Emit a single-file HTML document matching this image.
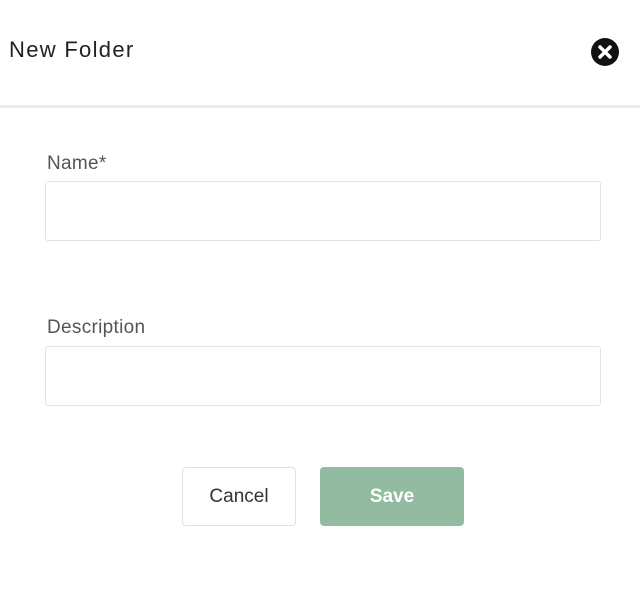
<!DOCTYPE html>
<html><head><meta charset="utf-8"><style>
html,body{margin:0;padding:0;background:#fff;width:640px;height:604px;overflow:hidden;font-family:"Liberation Sans",sans-serif;}
.title{position:absolute;left:9px;top:37px;font-size:22px;color:#222;letter-spacing:1.3px;}
.close{position:absolute;left:590px;top:37px;}
.hr{position:absolute;left:0;top:105px;width:640px;height:3px;background:#ececec;}
.label{position:absolute;left:47px;font-size:19px;color:#555;letter-spacing:0.3px;}
.input{position:absolute;left:45px;width:556px;height:60px;border:1.5px solid #e3e3e3;border-radius:3px;box-sizing:border-box;}
.btn{position:absolute;top:467px;height:59px;border-radius:4px;box-sizing:border-box;display:flex;align-items:center;justify-content:center;font-size:19px;}
</style></head><body>
<div class="title">New Folder</div>
<svg class="close" width="30" height="30" viewBox="0 0 30 30"><circle cx="15" cy="15" r="14" fill="#111"/><path d="M10 10L20 20M20 10L10 20" stroke="#fff" stroke-width="3.5" stroke-linecap="round"/></svg>
<div class="hr"></div>
<div class="label" style="top:153px">Name*</div>
<div class="input" style="top:181px"></div>
<div class="label" style="top:317px">Description</div>
<div class="input" style="top:346px"></div>
<div class="btn" style="left:182px;width:114px;border:1.5px solid #e0e0e0;color:#333;">Cancel</div>
<div class="btn" style="left:320px;width:144px;background:#92bba2;color:#fff;font-weight:bold;">Save</div>
</body></html>
